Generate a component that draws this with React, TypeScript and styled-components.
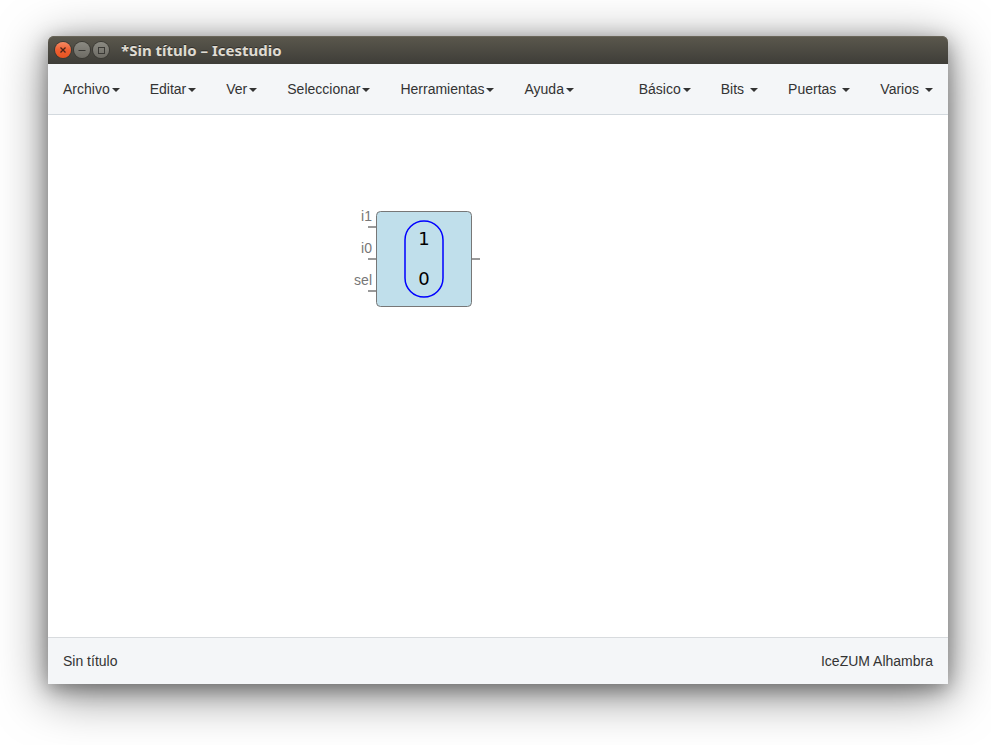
import React from "react";
import styled, { createGlobalStyle } from "styled-components";

const GlobalStyle = createGlobalStyle`
  *, *::before, *::after { box-sizing: border-box; }
  body {
    margin: 0;
    background: #fff;
    font-family: "Liberation Sans", Arial, sans-serif;
    font-size: 14px;
    line-height: 20px;
    color: #333;
  }
`;

const Desktop = styled.div`
  display: flex;
  min-height: 100vh;
  padding: 36px 43px 61px 48px;
  overflow: hidden;
`;

const AppWindow = styled.div`
  flex: 1;
  display: flex;
  flex-direction: column;
  min-width: 0;
  border-radius: 6px 6px 0 0;
  box-shadow: 0 10px 50px rgba(0, 0, 0, 0.5), 0 5px 20px rgba(0, 0, 0, 0.35);
`;

const TitleBar = styled.header`
  display: flex;
  align-items: center;
  height: 28px;
  padding: 0 7px;
  border-radius: 6px 6px 0 0;
  background: linear-gradient(#5b584d, #3e3d38);
  box-shadow: inset 0 1px 0 #696559;
`;

const WindowButtons = styled.div`
  display: flex;
  gap: 3px;
`;

const WindowButton = styled.button<{ $close?: boolean }>`
  width: 16px;
  height: 16px;
  padding: 0;
  border: 0;
  border-radius: 50%;
  color: ${(p) => (p.$close ? "#4a2418" : "#3a3935")};
  background: ${(p) =>
    p.$close
      ? "linear-gradient(#f58a63, #ee5f32 50%, #e9531f)"
      : "linear-gradient(#8b8a82, #6d6b64)"};
  box-shadow: 0 0 0 1px #3b3a35;

  svg { display: block; }
`;

const Title = styled.h1`
  margin: 0 0 0 12px;
  font: 700 15px/20px "Noto Sans", "Open Sans", sans-serif;
  color: #dfdbd2;
  text-shadow: 0 -1px 0 #2f2e2a;
`;

const Navbar = styled.nav`
  display: flex;
  flex-wrap: wrap;
  justify-content: space-between;
  min-height: 51px;
  border-bottom: 1px solid #d3d9de;
  background: #f4f6f8;
`;

const Menu = styled.div`
  display: flex;
`;

const MenuButton = styled.button<{ $gap: number }>`
  display: flex;
  align-items: center;
  gap: ${(p) => p.$gap}px;
  padding: 15px;
  border: 0;
  background: none;
  font: inherit;
  color: #333;
  cursor: pointer;

  &::after {
    content: "";
    margin-top: 2px;
    border-top: 4px solid;
    border-right: 4px solid transparent;
    border-left: 4px solid transparent;
  }
`;

const Canvas = styled.main`
  position: relative;
  flex: 1;
  background: #fff;
`;

const Node = styled.svg`
  position: absolute;
  left: 304px;
  top: 92px;
`;

const PortLabel = styled.text`
  font: 14px "Liberation Sans", Arial, sans-serif;
  fill: #777;
  text-anchor: end;
`;

const Digit = styled.text`
  font: 18px "DejaVu Sans", sans-serif;
  fill: #000;
  text-anchor: middle;
`;

const StatusBar = styled.footer`
  display: flex;
  justify-content: space-between;
  padding: 13px 15px;
  border-top: 1px solid #d8dbde;
  background: #f4f6f8;
`;

const mainMenu = ["Archivo", "Editar", "Ver", "Seleccionar", "Herramientas", "Ayuda"];
const blockMenu = [
  { label: "Básico", gap: 2 },
  { label: "Bits", gap: 6 },
  { label: "Puertas", gap: 6 },
  { label: "Varios", gap: 6 },
];
const inputs = [
  { name: "i1", y: 20 },
  { name: "i0", y: 52 },
  { name: "sel", y: 84 },
];

function Multiplexer() {
  return (
    <Node width="130" height="104" role="img" aria-label="Multiplexor">
      {inputs.map(({ name, y }) => (
        <g key={name}>
          <PortLabel x="20" y={y - 6}>{name}</PortLabel>
          <path d={`M16 ${y}H24`} stroke="#999" strokeWidth="2" />
        </g>
      ))}
      <path d="M120 52H128" stroke="#999" strokeWidth="2" />
      <rect x="24.5" y="4.5" width="95" height="95" rx="4" fill="#c0dfeb" stroke="#777" />
      <rect x="53" y="14" width="38" height="76" rx="19" fill="none" stroke="#00f" strokeWidth="1.5" />
      <Digit x="72" y="38">1</Digit>
      <Digit x="72" y="78">0</Digit>
    </Node>
  );
}

export default function App() {
  return (
    <>
      <GlobalStyle />
      <Desktop>
        <AppWindow>
          <TitleBar>
            <WindowButtons>
              <WindowButton $close aria-label="Cerrar">
                <svg width="16" height="16" stroke="currentColor" strokeWidth="1.3">
                  <path d="M5.5 5.5l5 5M10.5 5.5l-5 5" />
                </svg>
              </WindowButton>
              <WindowButton aria-label="Minimizar">
                <svg width="16" height="16" stroke="currentColor">
                  <path d="M4.5 8.5h7" />
                </svg>
              </WindowButton>
              <WindowButton aria-label="Maximizar">
                <svg width="16" height="16" stroke="currentColor" fill="none">
                  <rect x="5.5" y="5.5" width="6" height="6" />
                </svg>
              </WindowButton>
            </WindowButtons>
            <Title>*Sin título – Icestudio</Title>
          </TitleBar>
          <Navbar>
            <Menu>
              {mainMenu.map((label) => (
                <MenuButton key={label} $gap={2}>{label}</MenuButton>
              ))}
            </Menu>
            <Menu>
              {blockMenu.map(({ label, gap }) => (
                <MenuButton key={label} $gap={gap}>{label}</MenuButton>
              ))}
            </Menu>
          </Navbar>
          <Canvas>
            <Multiplexer />
          </Canvas>
          <StatusBar>
            <span>Sin título</span>
            <span>IceZUM Alhambra</span>
          </StatusBar>
        </AppWindow>
      </Desktop>
    </>
  );
}
